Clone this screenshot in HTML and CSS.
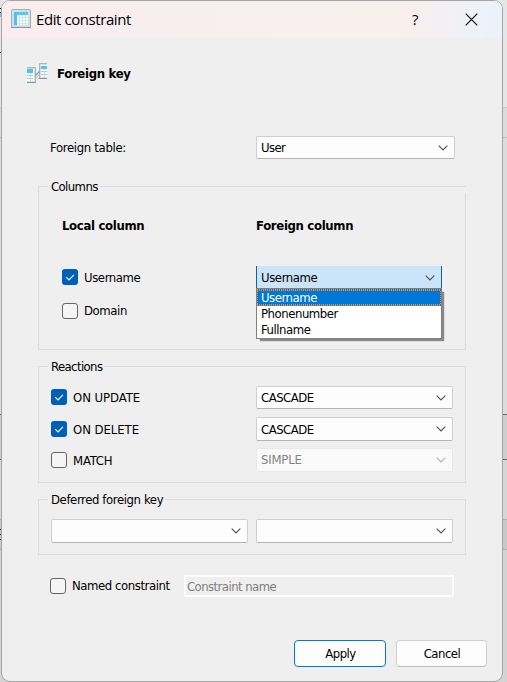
FILE: index.html
```html
<!DOCTYPE html>
<html lang="en">
<head>
<meta charset="utf-8">
<title>Edit constraint</title>
<link rel="stylesheet" href="styles.css">
</head>
<body>
<svg width="0" height="0" class="defs">
  <symbol id="chevron" viewBox="0 0 10 6"><path d="M.7.7 5 5 9.3.7" fill="none" stroke="currentColor" stroke-width="1.1"/></symbol>
  <symbol id="tick" viewBox="0 0 16 16"><path d="M4.2 8.2 7 10.900l4.900-5" fill="none" stroke="#fff" stroke-width="1.1"/></symbol>
</svg>
<main class="dialog">
  <header class="titlebar">
    <svg class="app-icon" width="20" height="20" viewBox="0 0 20 20">
      <rect x=".5" y=".5" width="19" height="18" rx="1" fill="#d5dfe1" stroke="#9fb0b5"/>
      <path d="M0 18.500h20" stroke="#83959b"/>
      <rect x="3" y="3" width="14" height="13" fill="#f5fcfd"/>
      <path d="M3 3h14v3H6v10H3z" fill="#4cc2f5"/>
      <path d="M6 8.500h11M6 11.500h11M6 14.500h11" stroke="#d3e6ea" stroke-width=".8"/>
      <path d="M8.500 6v10M11.500 6v10M14.500 6v10" stroke="#b5dbe8" stroke-width=".7"/>
      <path d="M8.500 3v3M11.500 3v3M14.500 3v3" stroke="#7bd2f7" stroke-width=".7"/>
    </svg>
    <span class="title">Edit constraint</span>
    <span class="help">?</span>
    <svg class="close" width="13" height="13" viewBox="0 0 13 13"><path d="M.7.7 12.300 12.300M12.300.7.7 12.300" stroke="#111" stroke-width="1.200"/></svg>
  </header>
  <div class="heading">
    <svg class="key-icon" width="20" height="20" viewBox="0 0 20 20">
      <path d="M0 4h9v16H0z" fill="#d3dcde"/>
      <path d="M0 6h7v12H0z" fill="#fafdfd"/>
      <path d="M0 4.500h8.500v15H0" fill="none" stroke="#a9b7ba"/>
      <path d="M0 19.500h9" stroke="#82999e"/>
      <path d="M0 6h6v4H0z" fill="#4cc2f5"/>
      <path d="M0 12.500h6M0 15.500h6" stroke="#b3c9cf"/>
      <path d="M3.500 10v8" stroke="#c6dde3"/>
      <path d="M12 0h8v16h-8z" fill="#d3dcde"/>
      <path d="M14 2h6v12h-6z" fill="#fafdfd"/>
      <path d="M20 .5h-7.500v15H20" fill="none" stroke="#a9b7ba"/>
      <path d="M11.500 15.500H20" stroke="#82999e"/>
      <path d="M14 3h6v3h-6z" fill="#4cc2f5"/>
      <path d="M14 8.500h6M14 11.500h6" stroke="#b3c9cf"/>
      <path d="M17.500 6v8" stroke="#c6dde3"/>
      <path d="M8.500 12.500l4-4" fill="none" stroke="#87969a" stroke-width="1.300"/>
      <path d="M9 15l3-3" stroke="#b6c0c2"/>
    </svg>
    <b class="w-heading">Foreign key</b>
  </div>
  <div class="table-row">
    <span class="w-table">Foreign table:</span>
    <div class="combo"><span class="w-user">User</span><svg class="chev"><use href="#chevron"/></svg></div>
  </div>

  <section class="group columns">
    <div class="legend"><span class="w-columns">Columns</span></div>
    <div class="pair names"><b class="w-local">Local column</b><b class="w-foreign">Foreign column</b></div>
    <div class="pair first">
      <label class="check"><i class="box on"><svg><use href="#tick"/></svg></i><span>Username</span></label>
      <div class="combo open"><span>Username</span><svg class="chev"><use href="#chevron"/></svg>
        <div class="menu">
          <div class="option selected"><span class="w-option">Username</span></div>
          <div class="option"><span class="w-option">Phonenumber</span></div>
          <div class="option"><span class="w-option">Fullname</span></div>
        </div>
      </div>
    </div>
    <div class="pair second"><label class="check"><i class="box"></i><span>Domain</span></label></div>
  </section>

  <section class="group reactions">
    <div class="legend"><span class="w-reactions">Reactions</span></div>
    <div class="pair update">
      <label class="check"><i class="box on"><svg><use href="#tick"/></svg></i><span class="w-action">ON UPDATE</span></label>
      <div class="combo"><span class="w-cascade">CASCADE</span><svg class="chev"><use href="#chevron"/></svg></div>
    </div>
    <div class="pair delete">
      <label class="check"><i class="box on"><svg><use href="#tick"/></svg></i><span class="w-action">ON DELETE</span></label>
      <div class="combo"><span class="w-cascade">CASCADE</span><svg class="chev"><use href="#chevron"/></svg></div>
    </div>
    <div class="pair match">
      <label class="check"><i class="box"></i><span class="w-match">MATCH</span></label>
      <div class="combo disabled"><span class="w-match">SIMPLE</span><svg class="chev"><use href="#chevron"/></svg></div>
    </div>
  </section>

  <section class="group deferred">
    <div class="legend"><span>Deferred foreign key</span></div>
    <div class="pair">
      <div class="combo"><svg class="chev"><use href="#chevron"/></svg></div>
      <div class="combo"><svg class="chev"><use href="#chevron"/></svg></div>
    </div>
  </section>

  <div class="named">
    <label class="check"><i class="box"></i><span class="w-named">Named constraint</span></label>
    <div class="field"><span class="w-name">Constraint name</span></div>
  </div>
  <footer class="actions">
    <button class="button primary"><span class="w-apply">Apply</span></button>
    <button class="button"><span class="w-apply">Cancel</span></button>
  </footer>
</main>
</body>
</html>
```
FILE: styles.css
```css
* { box-sizing: border-box; }
html, body { height: 100%; }
body {
  margin: 0;
  overflow: hidden;
  font: 13px/16px "DejaVu Sans Condensed", "DejaVu Sans", sans-serif;
  font-stretch: condensed;
  letter-spacing: -0.4px;
  color: #000;
  background:
    linear-gradient(#000, #000) 0 8px / 3px 1px no-repeat,
    linear-gradient(#000, #000) 0 12px / 2px 1px no-repeat,
    linear-gradient(#73c6ef, #73c6ef) 0 13px / 2px 4px no-repeat,
    linear-gradient(#000, #000) 0 52px / 2px 1px no-repeat,
    linear-gradient(#222, #222) 0 529px / 2px 1px no-repeat,
    linear-gradient(#222, #222) 0 534px / 2px 1px no-repeat,
    linear-gradient(#222, #222) 0 539px / 2px 1px no-repeat,
    linear-gradient(#e6e6e6 0 107px, #c8c8c8 107px 108px, #dcdcdc 108px 137px, #bdbdbd 137px 138px, #dcdcdc 138px 414px, #6c6c70 414px 415px, #cecece 415px 459px, #6c6c70 459px 460px, #d6d6d6 460px 519px, #b2b2b2 519px 520px, #c8c8c8 520px 549px, #b2b2b2 549px 550px, #d3d3d3 550px);
}
.defs { position: absolute; }
.dialog {
  width: 502px;
  height: 682px;
  margin-left: 1px;
  border: 1px solid #a5a5a5;
  border-radius: 9px;
  background: #efefef;
  overflow: hidden;
}
.titlebar {
  display: flex;
  align-items: center;
  height: 37px;
  padding: 0 24px 0 9px;
  background: linear-gradient(90deg, #f9edf0, #f9efee 55%, #f9efed 80%, #edf2fa 97%);
}
.app-icon { margin: -1px 5px 0 0; }
.title { margin-top: -1px; font: 15px/20px "Open Sans", sans-serif; letter-spacing: -0.42px; }
.help { margin: -1px 0 0 auto; font: 15px/20px "Open Sans", sans-serif; }
.close { margin: -1px 0 0 47px; }
.heading { display: flex; align-items: center; gap: 10px; height: 20px; margin: 25px 0 0 25px; }
.w-heading { padding-top: 2px; letter-spacing: -0.3px; }
.table-row { display: grid; grid-template-columns: 206px 199px; align-items: center; margin: 53px 0 0 48px; }
.w-table { letter-spacing: -0.33px; }
.combo {
  position: relative;
  display: flex;
  align-items: center;
  justify-content: space-between;
  height: 24px;
  padding: 0 6px 0 4px;
  border: 1px solid #cfcfcf;
  border-bottom-color: #b4b4b4;
  border-radius: 2px;
  background: #fdfdfd;
}
.table-row .combo { height: 23px; }
.w-user { letter-spacing: -0.6px; }
.chev { width: 10px; height: 6px; margin-left: auto; color: #505050; }
.group { width: 428px; margin-left: 36px; border: 1px solid #dcdcdc; }
.legend { width: max-content; height: 16px; margin: -8px 0 0 9px; padding: 0 2px 0 3px; background: #efefef; }
.w-columns, .w-reactions { letter-spacing: -0.6px; }
.pair { display: grid; align-items: center; margin-left: 12px; grid-template-columns: 205px 197px; }
.check { display: flex; align-items: center; gap: 6px; height: 16px; }
.box { width: 16px; height: 16px; border: 1px solid #666; border-radius: 3px; background: #f5f5f5; }
.box.on { border: 0; background: #005fb8; }
.box svg { display: block; width: 16px; height: 16px; }
.columns { position: relative; height: 164px; margin-top: 27px; }
.columns::after {
  content: "";
  position: absolute;
  top: 0;
  right: -1px;
  width: 1px;
  height: 6px;
  background: #efefef;
}
.columns .pair { margin-left: 23px; grid-template-columns: 194px 186px; }
.names { margin-top: 23px; }
.w-local, .w-foreign { letter-spacing: -0.33px; }
.first { margin-top: 32px; height: 23px; }
.first .check { margin-top: -1px; }
.first .check span, .update .check span, .delete .check span { padding-top: 2px; }
.combo.open { height: 23px; border: solid #0067c0; border-width: 0 1px; background: #cce4f7; border-radius: 0; }
.menu {
  position: absolute;
  z-index: 1;
  left: -1px;
  top: 22px;
  width: 186px;
  height: 51px;
  border: 1px solid #808080;
  background: #fff;
  box-shadow: 3px 3px 1px -1px #888;
}
.option { height: 16px; padding-left: 4px; }
.option.selected {
  height: 17px;
  line-height: 17px;
  color: #fff;
  background:
    repeating-linear-gradient(90deg, #f38b38 0 1px, #0078d7 1px 2px) 0 0 / 100% 2px no-repeat,
    repeating-linear-gradient(90deg, #f38b38 0 1px, #0078d7 1px 2px) 0 100% / 100% 2px no-repeat,
    repeating-linear-gradient(#f38b38 0 1px, #0078d7 1px 2px) 0 0 / 1px 100% no-repeat,
    repeating-linear-gradient(#f38b38 0 1px, #0078d7 1px 2px) 100% 0 / 1px 100% no-repeat,
    #0078d7;
}
.w-option { letter-spacing: -0.46px; }
.second { margin-top: 14px; }
.reactions { height: 117px; margin-top: 16px; }
.w-action { letter-spacing: -0.05px; }
.w-cascade { letter-spacing: -0.52px; }
.w-match { letter-spacing: -0.2px; }
.update { margin-top: 11px; height: 23px; }
.update .combo { height: 23px; }
.update .check, .delete .check { margin-top: -1px; }
.delete { margin-top: 8px; }
.delete .combo span { padding-top: 1px; }
.match { margin-top: 7px; }
.match .check span { padding-top: 1px; }
.disabled { color: #838383; background: #f9f9f9; border-color: #e8e8e8; }
.disabled .chev { color: #b4b4b4; }
.deferred { height: 56px; margin-top: 16px; }
.deferred .pair { margin-top: 11px; gap: 8px; grid-template-columns: 197px 197px; }
.named { display: grid; grid-template-columns: 134px 270px; align-items: center; margin: 20px 0 0 48px; }
.w-named { letter-spacing: -0.43px; }
.field { height: 22px; padding: 2px 1px; border: 2px solid #fcfcfc; background: #efefef; color: #808080; }
.w-name { letter-spacing: -0.56px; }
.actions { display: flex; justify-content: flex-end; gap: 10px; margin: 43px 15px 0 0; }
.w-apply { letter-spacing: -0.5px; }
.button {
  width: 91px;
  height: 27px;
  padding: 0 0 0 1px;
  border: 1px solid #d0d0d0;
  border-bottom-color: #bbb;
  border-radius: 4px;
  background: #fdfdfd;
  color: #000;
  font: inherit;
  letter-spacing: inherit;
}
.primary { width: 92px; border-color: #0078d4; }
```
